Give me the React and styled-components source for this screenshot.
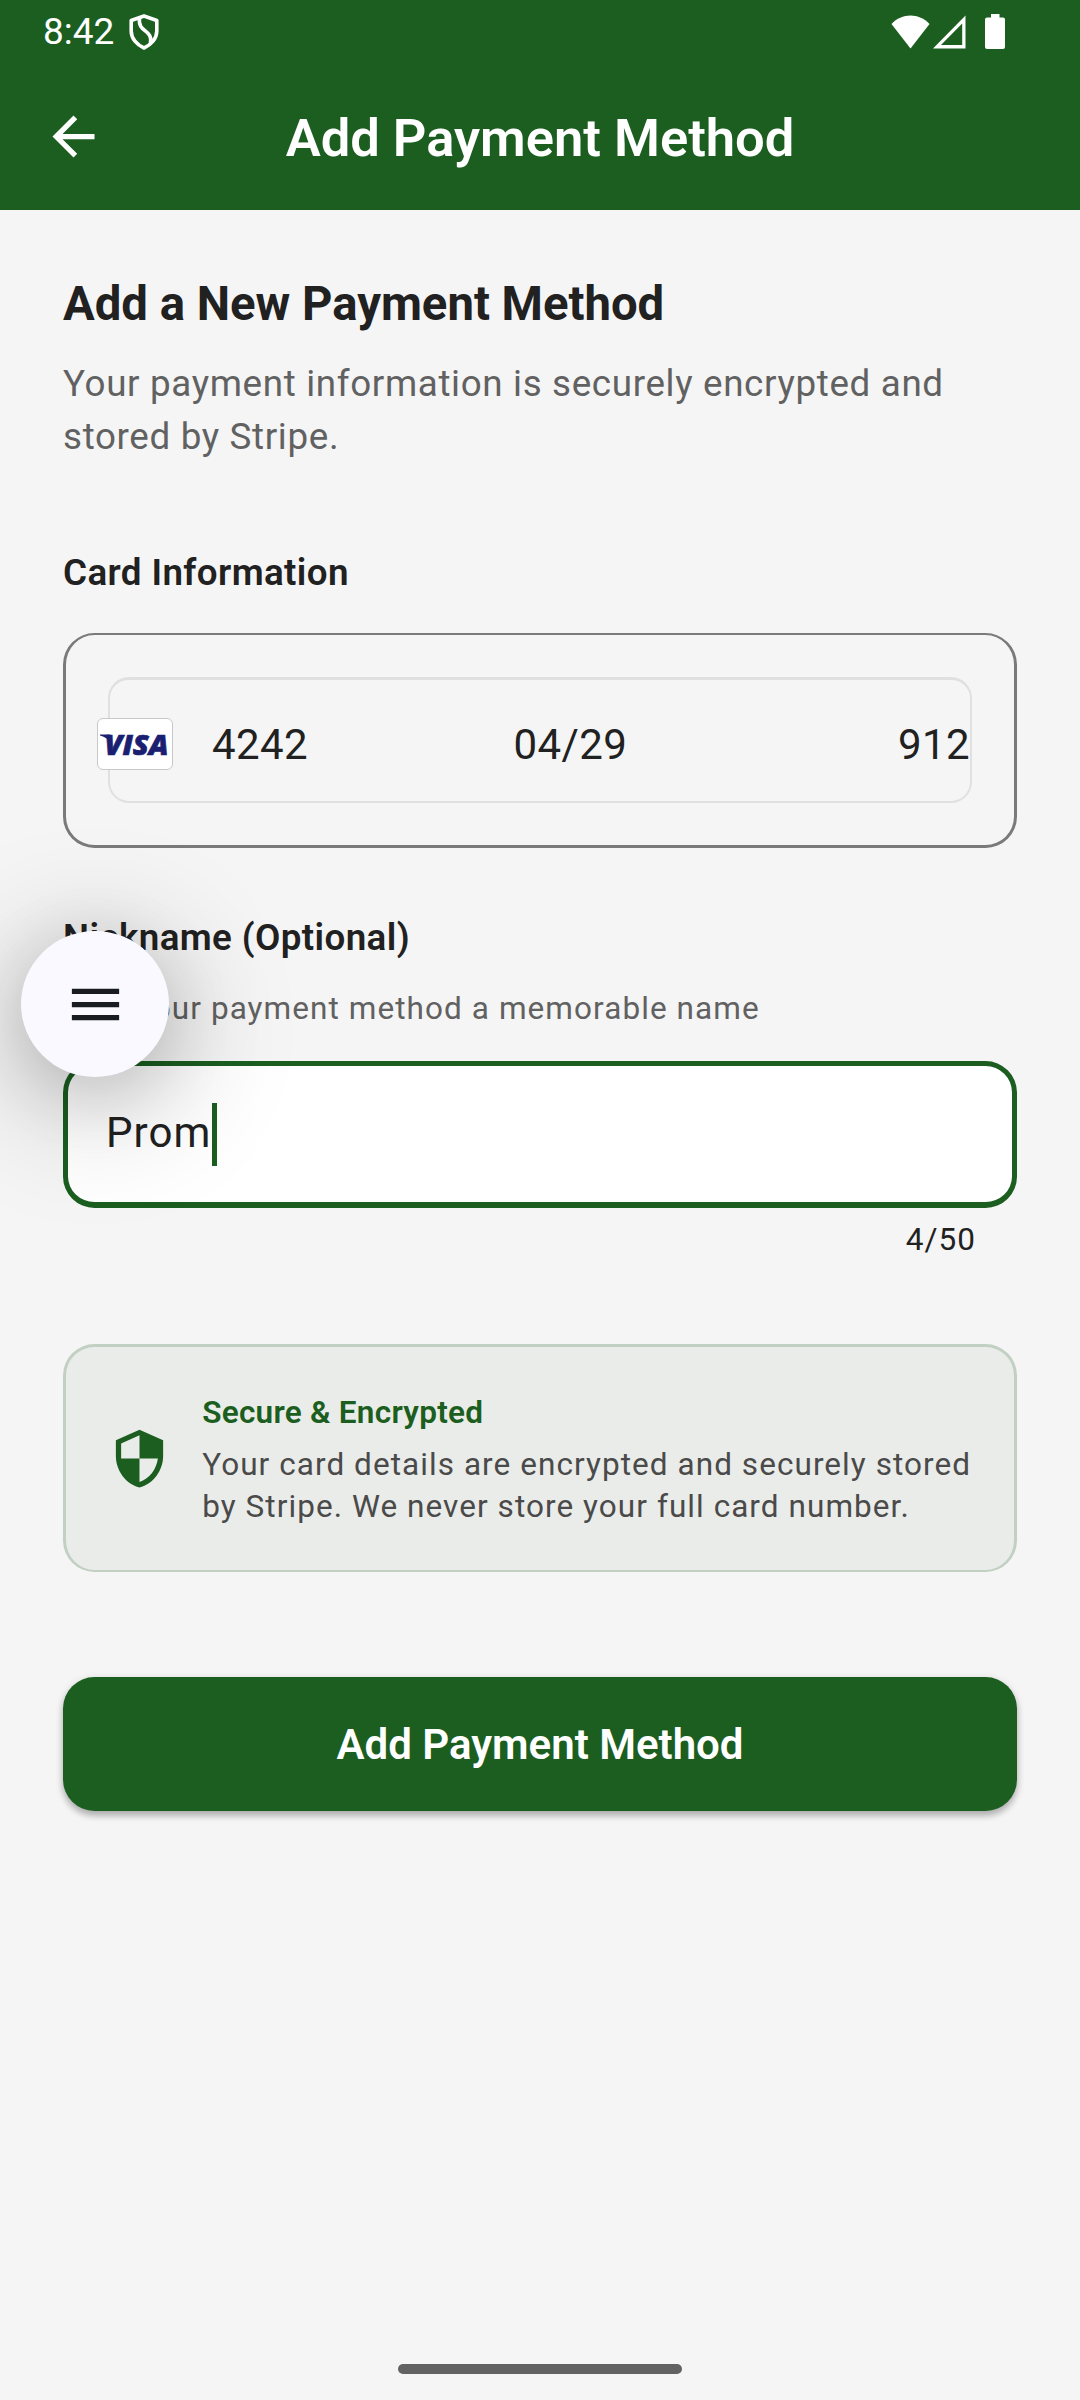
import React from "react";
import styled, { createGlobalStyle } from "styled-components";

const GREEN = "#1b5e20";

const GlobalStyle = createGlobalStyle`
  html, body { margin: 0; padding: 0; background: #f5f5f5; }
  *, *::before, *::after { box-sizing: border-box; }
  button { border: 0; padding: 0; background: none; font: inherit; color: inherit; }
`;

const Screen = styled.div`
  position: relative;
  width: 1080px;
  height: 2400px;
  display: flex;
  flex-direction: column;
  overflow: hidden;
  background: #f5f5f5;
  color: #212121;
  font-family: Roboto, "Liberation Sans", sans-serif;
`;

const Header = styled.header`
  height: 210px;
  background: ${GREEN};
  color: #fff;
`;

const StatusBar = styled.div`
  height: 63px;
  padding: 0 75px 0 43px;
  display: flex;
  align-items: center;
  justify-content: space-between;
`;

const StatusGroup = styled.div`
  display: flex;
  align-items: center;
  gap: ${(p) => p.$gap};
`;

const BatterySlot = styled.div`
  padding-left: 16px;
  display: flex;
`;

const Clock = styled.span`
  font-size: 37px;
  line-height: 63px;
`;

const Toolbar = styled.div`
  height: 147px;
  padding: 0 42px;
  display: grid;
  grid-template-columns: 63px 1fr 63px;
  align-items: center;
`;

const IconButton = styled.button`
  width: 63px;
  height: 63px;
  display: block;
  svg { display: block; }
`;

const Title = styled.h1`
  margin: 0;
  padding-top: 3px;
  text-align: center;
  font-size: 52.5px;
  line-height: 62px;
  font-weight: 600;
`;

const Content = styled.main`
  flex: 1;
  padding: 63px 63px 0;
  display: flex;
  flex-direction: column;
`;

const Heading = styled.h2`
  margin: 0;
  font-size: 47.25px;
  line-height: 62px;
  font-weight: 700;
`;

const Lead = styled.p`
  margin: 22px 0 0;
  font-size: 36.75px;
  line-height: 53px;
  letter-spacing: 0.66px;
  color: #616161;
`;

const Label = styled.h3`
  margin: ${(p) => p.$top} 0 0;
  font-size: 36.75px;
  line-height: 52px;
  font-weight: 600;
  letter-spacing: 0.4px;
`;

const Hint = styled.p`
  margin: 24px 0 0;
  font-size: 31.5px;
  line-height: 42px;
  letter-spacing: 1.07px;
  color: #616161;
`;

const CardPanel = styled.section`
  margin-top: 34px;
  height: 215px;
  padding: 42px 42px 43px;
  border: 3px solid #7a7a7a;
  border-top-width: 2px;
  border-radius: 31.5px;
`;

const CardField = styled.div`
  height: 126px;
  border: 2px solid #e0e0e0;
  border-top-width: 3px;
  border-radius: 21px;
  display: flex;
  align-items: center;
  font-size: 42px;
  line-height: 50px;
`;

const Brand = styled.div`
  width: 76px;
  height: 52px;
  margin: 6px 0 0 -13px;
  border: 1px solid #c8c8c8;
  border-radius: 6px;
  background: #fff;
  svg { display: block; }
`;

const CardValue = styled.span`
  width: ${(p) => p.$width};
  margin-left: ${(p) => p.$left};
  padding-top: 8px;
  letter-spacing: 0.4px;
`;

const NicknameInput = styled.div`
  margin-top: 31px;
  height: 147px;
  padding: 0 38px;
  border: 5px solid ${GREEN};
  border-bottom-width: 6px;
  border-radius: 31.5px;
  background: #fff;
  display: flex;
  align-items: center;
  font-size: 42px;
  letter-spacing: 1.05px;
`;

const InputText = styled.span`
  line-height: 59px;
  padding-bottom: 4px;
`;

const Caret = styled.span`
  width: 5px;
  height: 63px;
  margin-left: 1px;
  background: ${GREEN};
`;

const Counter = styled.div`
  margin-top: 11px;
  padding-right: 41px;
  text-align: right;
  font-size: 31.5px;
  line-height: 42px;
  letter-spacing: 1.05px;
`;

const Notice = styled.section`
  margin-top: 83px;
  height: 228px;
  padding: 0 39px 0 41.7px;
  border: 3px solid #c1d0c2;
  border-bottom-width: 2px;
  border-radius: 31.5px;
  background: #eaece9;
  display: flex;
  align-items: center;
  gap: 31.5px;
  svg { display: block; flex: none; }
`;

const NoticeBody = styled.div`
  white-space: nowrap;
  padding-top: 2px;
`;

const NoticeTitle = styled.div`
  font-size: 31.5px;
  line-height: 42px;
  font-weight: 600;
  letter-spacing: 0.26px;
  color: ${GREEN};
`;

const NoticeText = styled.div`
  margin-top: 10px;
  font-size: 31.5px;
  line-height: 42px;
  letter-spacing: 1.06px;
  color: #4a4a4a;
`;

const SubmitButton = styled.button`
  && {
    margin-top: 105px;
    height: 134px;
    padding-top: 1px;
    border-radius: 31.5px;
    background: ${GREEN};
    color: #fff;
    font-size: 42px;
    font-weight: 600;
    box-shadow: 0 5px 6px rgba(0, 0, 0, 0.22), 0 2px 10px rgba(0, 0, 0, 0.12);
  }
`;

const HomeBar = styled.footer`
  height: 36px;
  display: flex;
  justify-content: center;
`;

const HomePill = styled.div`
  width: 284px;
  height: 10px;
  border-radius: 5px;
  background: #626262;
`;

const FloatingMenu = styled.button`
  && {
    position: absolute;
    left: 21px;
    top: 931px;
    width: 148px;
    height: 146px;
    border-radius: 50%;
    background: #f9f9ff;
    color: #191c20;
    display: flex;
    align-items: center;
    justify-content: center;
    box-shadow: 0 22px 130px 8px rgba(0, 0, 0, 0.24), 0 14px 70px rgba(0, 0, 0, 0.14);
  }
`;

function Svg({ size = 63, children }) {
  return (
    <svg width={size} height={size} viewBox="0 0 24 24" fill="currentColor">
      {children}
    </svg>
  );
}

function PrivacyShield() {
  return (
    <svg width="30" height="36" viewBox="0 0 30 36" fill="none" stroke="#fff" strokeWidth="3.6" strokeLinejoin="round">
      <path d="M15 2 L27.8 6.5 V17 C27.8 24.5 22 31 15 34 C8 31 2.2 24.5 2.2 17 V6.5 Z" />
      <path d="M10.5 4 C8.5 19 24 15 21.5 29" />
    </svg>
  );
}

function Wifi() {
  return (
    <svg width="39" height="34" viewBox="0 0 40 34" preserveAspectRatio="none" fill="#fff">
      <path d="M0.5 9 C11 -2.4 29 -2.4 39.5 9 L20 33.5 Z" />
    </svg>
  );
}

function Signal() {
  return (
    <svg width="33" height="34" viewBox="0 0 33 34" fill="#fff" fillRule="evenodd">
      <path d="M0 33.5 L32.5 0.5 V33.5 Z M8 30 H29.2 V8.5 Z" />
    </svg>
  );
}

function Battery() {
  return (
    <svg width="20" height="35" viewBox="0 0 20 35" fill="#fff">
      <path d="M6 0 H14.5 V3.5 H18 Q20 3.5 20 5.5 V33 Q20 35 18 35 H2 Q0 35 0 33 V5.5 Q0 3.5 2 3.5 H6 Z" />
    </svg>
  );
}

function VisaMark() {
  return (
    <svg width="74" height="50" viewBox="0 0 74 50">
      <text
        x="6.5"
        y="36.2"
        fill="#1a1f71"
        stroke="#1a1f71"
        strokeWidth="0.7"
        fontFamily='"Open Sans", sans-serif'
        fontWeight="800"
        fontStyle="italic"
        fontSize="28.5"
        textLength="64"
        lengthAdjust="spacingAndGlyphs"
      >
        VISA
      </text>
      <path d="M2 15.6 H12 L13.5 25 Q9.5 18.3 2 16.6 Z" fill="#1a1f71" />
    </svg>
  );
}

export default function App() {
  return (
    <>
      <GlobalStyle />
      <Screen>
        <Header>
          <StatusBar>
            <StatusGroup $gap="15px">
              <Clock>8:42</Clock>
              <PrivacyShield />
            </StatusGroup>
            <StatusGroup $gap="3px">
              <Wifi />
              <Signal />
              <BatterySlot>
                <Battery />
              </BatterySlot>
            </StatusGroup>
          </StatusBar>
          <Toolbar>
            <IconButton aria-label="Back">
              <Svg>
                <path d="M20 11H7.83l5.59-5.59L12 4l-8 8 8 8 1.41-1.41L7.83 13H20v-2z" />
              </Svg>
            </IconButton>
            <Title>Add Payment Method</Title>
          </Toolbar>
        </Header>

        <Content>
          <Heading>Add a New Payment Method</Heading>
          <Lead>
            Your payment information is securely encrypted and
            <br />
            stored by Stripe.
          </Lead>

          <Label $top="84px">Card Information</Label>
          <CardPanel>
            <CardField>
              <Brand>
                <VisaMark />
              </Brand>
              <CardValue $left="39px" $width="302px">4242</CardValue>
              <CardValue $left="0" $width="385px">04/29</CardValue>
              <CardValue $left="0" $width="72px">912</CardValue>
            </CardField>
          </CardPanel>

          <Label $top="64px">Nickname (Optional)</Label>
          <Hint>Give your payment method a memorable name</Hint>
          <NicknameInput>
            <InputText>Prom</InputText>
            <Caret />
          </NicknameInput>
          <Counter>4/50</Counter>

          <Notice>
            <Svg>
              <path
                fill="#1b5e20"
                d="M12 1L3 5v6c0 5.55 3.84 10.74 9 12 5.16-1.26 9-6.45 9-12V5l-9-4zm0 10.99h7c-.53 4.12-3.28 7.79-7 8.94V12H5V6.3l7-3.11v8.8z"
              />
            </Svg>
            <NoticeBody>
              <NoticeTitle>Secure &amp; Encrypted</NoticeTitle>
              <NoticeText>
                Your card details are encrypted and securely stored
                <br />
                by Stripe. We never store your full card number.
              </NoticeText>
            </NoticeBody>
          </Notice>

          <SubmitButton>Add Payment Method</SubmitButton>
        </Content>

        <HomeBar>
          <HomePill />
        </HomeBar>

        <FloatingMenu aria-label="Menu">
          <Svg>
            <path d="M3 18h18v-2H3v2zm0-5h18v-2H3v2zm0-7v2h18V6H3z" />
          </Svg>
        </FloatingMenu>
      </Screen>
    </>
  );
}
